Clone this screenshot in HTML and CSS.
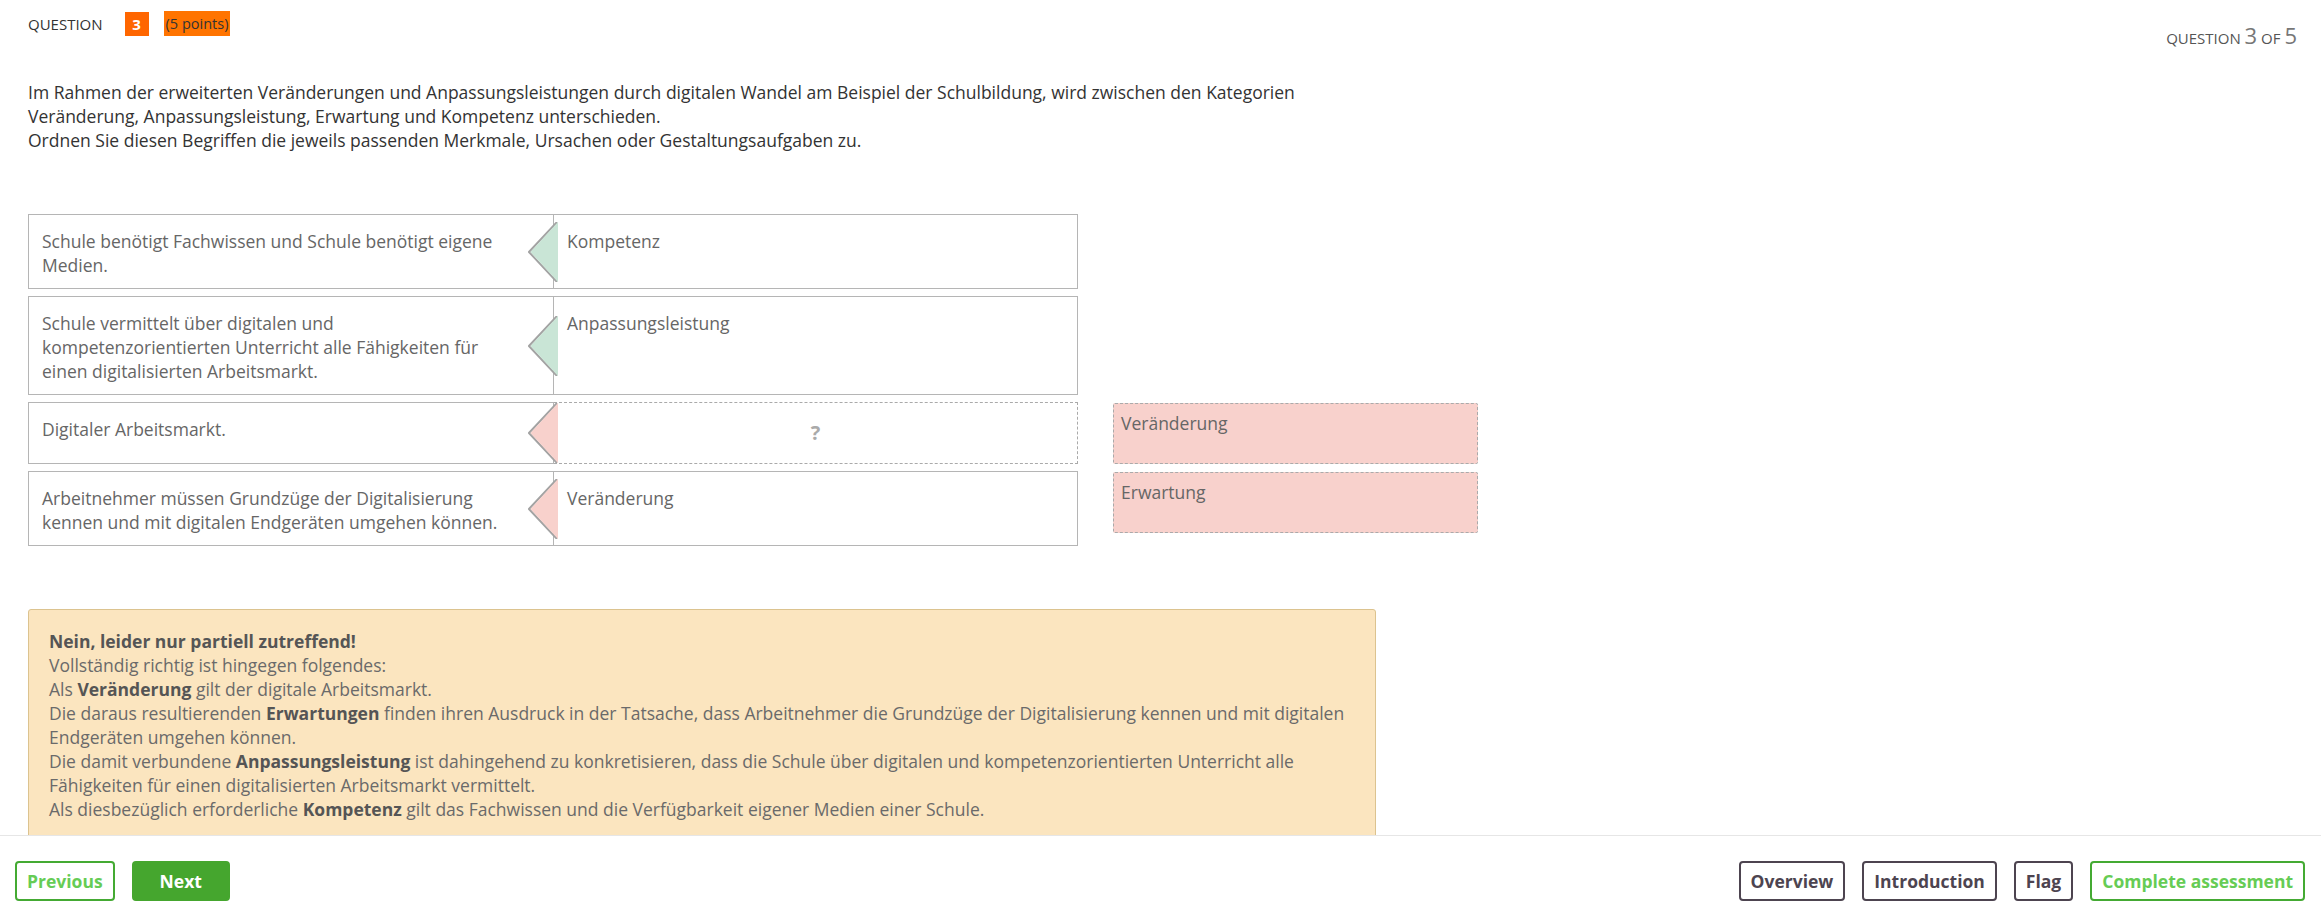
FILE: index.html
```html
<!DOCTYPE html>
<html lang="de">
<head>
<meta charset="utf-8">
<title>Question 3</title>
<link rel="stylesheet" href="styles.css">
</head>
<body>
<header class="header">
  <div class="hleft">
    <span class="qlabel">QUESTION</span>
    <span class="badge">3</span>
    <span class="points">(5 points)</span>
  </div>
  <div class="hright">QUESTION <span class="big">3</span> OF <span class="big">5</span></div>
</header>

<main class="content">
  <p class="question">Im Rahmen der erweiterten Veränderungen und Anpassungsleistungen durch digitalen Wandel am Beispiel der Schulbildung, wird zwischen den Kategorien Veränderung, Anpassungsleistung, Erwartung und Kompetenz unterschieden.<br>Ordnen Sie diesen Begriffen die jeweils passenden Merkmale, Ursachen oder Gestaltungsaufgaben zu.</p>

  <div class="matching">
    <div class="rows">
      <div class="row">
        <div class="lcell">Schule benötigt Fachwissen und Schule benötigt eigene Medien.</div>
        <div class="rcell">
          <svg class="arrow" width="30" height="60" viewBox="0 0 30 60"><polyline points="29,0 1,30 29,60" fill="none" stroke="#a3a3a3" stroke-width="2"/><polygon points="30,0 2.5,30 30,60" fill="#c9e5d6"/></svg>
          Kompetenz
        </div>
      </div>
      <div class="row">
        <div class="lcell">Schule vermittelt über digitalen und kompetenzorientierten Unterricht alle Fähigkeiten für einen digitalisierten Arbeitsmarkt.</div>
        <div class="rcell">
          <svg class="arrow" width="30" height="60" viewBox="0 0 30 60"><polyline points="29,0 1,30 29,60" fill="none" stroke="#a3a3a3" stroke-width="2"/><polygon points="30,0 2.5,30 30,60" fill="#c9e5d6"/></svg>
          Anpassungsleistung
        </div>
      </div>
      <div class="row row-empty">
        <div class="lcell">Digitaler Arbeitsmarkt.</div>
        <div class="rcell rcell-empty">
          <svg class="arrow" width="30" height="60" viewBox="0 0 30 60"><polyline points="29,0 1,30 29,60" fill="none" stroke="#a3a3a3" stroke-width="2"/><polygon points="30,0 2.5,30 30,60" fill="#f8d1cc"/></svg>
          <span class="qmark">?</span>
        </div>
      </div>
      <div class="row">
        <div class="lcell">Arbeitnehmer müssen Grundzüge der Digitalisierung kennen und mit digitalen Endgeräten umgehen können.</div>
        <div class="rcell">
          <svg class="arrow" width="30" height="60" viewBox="0 0 30 60"><polyline points="29,0 1,30 29,60" fill="none" stroke="#a3a3a3" stroke-width="2"/><polygon points="30,0 2.5,30 30,60" fill="#f8d1cc"/></svg>
          Veränderung
        </div>
      </div>
    </div>
    <div class="pool">
      <div class="pitem">Veränderung</div>
      <div class="pitem">Erwartung</div>
    </div>
  </div>

  <div class="feedback">
    <p class="fline"><b>Nein, leider nur partiell zutreffend!</b></p>
    <p class="fline">Vollständig richtig ist hingegen folgendes:</p>
    <p class="fline">Als <b>Veränderung</b> gilt der digitale Arbeitsmarkt.</p>
    <p class="fline">Die daraus resultierenden <b>Erwartungen</b> finden ihren Ausdruck in der Tatsache, dass Arbeitnehmer die Grundzüge der Digitalisierung kennen und mit digitalen Endgeräten umgehen können.</p>
    <p class="fline">Die damit verbundene <b>Anpassungsleistung</b> ist dahingehend zu konkretisieren, dass die Schule über digitalen und kompetenzorientierten Unterricht alle Fähigkeiten für einen digitalisierten Arbeitsmarkt vermittelt.</p>
    <p class="fline">Als diesbezüglich erforderliche <b>Kompetenz</b> gilt das Fachwissen und die Verfügbarkeit eigener Medien einer Schule.</p>
  </div>
</main>

<footer class="footer">
  <div class="fgroup">
    <button class="btn btn-outline-green">Previous</button>
    <button class="btn btn-green">Next</button>
  </div>
  <div class="fgroup">
    <button class="btn btn-dark">Overview</button>
    <button class="btn btn-dark">Introduction</button>
    <button class="btn btn-dark">Flag</button>
    <button class="btn btn-outline-green">Complete assessment</button>
  </div>
</footer>
</body>
</html>
```

FILE: styles.css
```css
* { box-sizing: border-box; }

body {
  margin: 0;
  font-family: "Open Sans", "DejaVu Sans", sans-serif;
  background: #fff;
  color: #333;
}

.header {
  display: flex;
  justify-content: space-between;
  align-items: flex-start;
  height: 36px;
  padding: 11px 24px 0 28px;
}

.hleft {
  display: flex;
  align-items: center;
  height: 25px;
}

.qlabel {
  font-size: 15px;
  line-height: 20px;
  color: #333;
  margin-right: 22px;
}

.badge {
  width: 24px;
  height: 24px;
  background: #ff6600;
  color: #fff;
  font-weight: 700;
  font-size: 15px;
  display: flex;
  align-items: center;
  justify-content: center;
  margin-right: 15px;
}

.points {
  background: #ff7400;
  color: #333;
  font-size: 14.5px;
  line-height: 25px;
  padding: 0 2px;
}

.hright {
  margin-top: 9px;
  font-size: 15px;
  line-height: 30px;
  color: #555;
}

.hright .big {
  font-size: 22px;
  color: #777;
}

.content {
  padding: 0 28px;
}

.question {
  margin: 44px 0 0;
  width: 1350px;
  font-size: 17.5px;
  line-height: 24px;
  color: #333;
}

.matching {
  display: flex;
  gap: 35px;
  margin-top: 62px;
  align-items: flex-start;
}

.rows {
  width: 1050px;
  display: flex;
  flex-direction: column;
  gap: 7px;
}

.row {
  display: flex;
  min-height: 62px;
}

.lcell {
  width: 526px;
  flex: none;
  border: 1px solid #b5b5b5;
  padding: 14px 40px 11px 13px;
  font-size: 17.5px;
  line-height: 24px;
  color: #666;
}

.rcell {
  position: relative;
  flex: 1;
  border: 1px solid #b5b5b5;
  border-left: 0;
  padding: 14px 13px 11px 13px;
  font-size: 17.5px;
  line-height: 24px;
  color: #666;
}

.rcell-empty {
  border-style: dashed;
  border-color: #aaa;
  display: flex;
  align-items: center;
  justify-content: center;
  padding: 0;
}

.qmark {
  font-weight: 700;
  font-size: 20px;
  color: #aaa;
}

.arrow {
  position: absolute;
  left: -26px;
  top: 50%;
  margin-top: -30px;
  display: block;
}

.pool {
  width: 365px;
  margin-top: 189px;
  display: flex;
  flex-direction: column;
  gap: 8px;
}

.pitem {
  height: 61px;
  background: #f8d1cc;
  border: 1px dashed #aaa;
  border-radius: 2px;
  padding: 7px 7px;
  font-size: 17.5px;
  line-height: 24px;
  color: #666;
}

.feedback {
  margin-top: 63px;
  width: 1348px;
  background: #fbe5bf;
  border: 1px solid #dcc38f;
  border-radius: 3px;
  padding: 19px 20px 19px 20px;
  font-size: 17.5px;
  line-height: 24px;
  color: #6a6a6a;
}

.fline {
  margin: 0;
}

.feedback b {
  color: #555;
  font-weight: 700;
}

.footer {
  position: fixed;
  left: 0;
  right: 0;
  bottom: 0;
  height: 82px;
  background: #fff;
  border-top: 1px solid #e6e6e6;
  padding: 25px 16px 0 15px;
  display: flex;
  justify-content: space-between;
  align-items: flex-start;
}

.fgroup {
  display: flex;
  gap: 17px;
}

.btn {
  height: 40px;
  padding: 0 10px;
  border: 2px solid;
  border-radius: 4px;
  background: #fff;
  font-family: "Open Sans", "DejaVu Sans", sans-serif;
  font-weight: 700;
  font-size: 17.5px;
  line-height: 36px;
  cursor: pointer;
}

.btn-outline-green {
  border-color: #44aa33;
  color: #66cc55;
}

.btn-green {
  background: #45a62e;
  border-color: #45a62e;
  color: #fff;
  padding: 0 26px;
}

.btn-dark {
  border-color: #4d4450;
  color: #4d4450;
}
```
